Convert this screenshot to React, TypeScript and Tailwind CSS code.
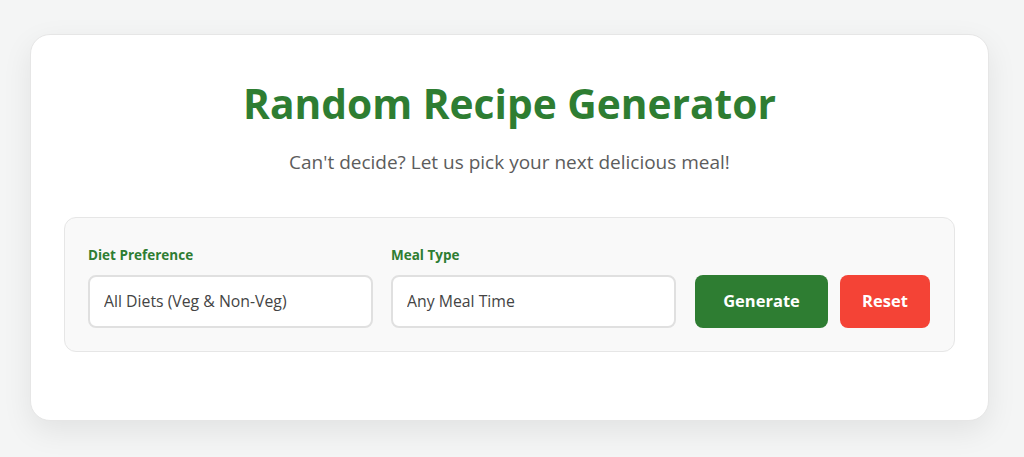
import React, { useState } from 'react';

const dietOptions = ['All Diets (Veg & Non-Veg)', 'Vegetarian', 'Non-Vegetarian', 'Vegan'];
const mealOptions = ['Any Meal Time', 'Breakfast', 'Lunch', 'Dinner', 'Snack'];

const SelectBox: React.FC<{ label: string; value: string; options: string[]; onChange: (v: string) => void }> = ({
  label,
  value,
  options,
  onChange,
}) => (
  <div className="flex flex-col w-[285px]">
    <label className="text-[13.5px] font-bold text-[#2e7d32] mb-[11px] leading-[18px]">{label}</label>
    <select
      value={value}
      onChange={(e) => onChange(e.target.value)}
      className="appearance-none h-[53px] px-[14px] bg-white border-2 border-[#e0e0e0] rounded-lg text-[15.8px] text-[#444] outline-none"
    >
      {options.map((o) => (
        <option key={o} value={o}>
          {o}
        </option>
      ))}
    </select>
  </div>
);

export default function App() {
  const [diet, setDiet] = useState(dietOptions[0]);
  const [meal, setMeal] = useState(mealOptions[0]);

  return (
    <div className="min-h-[457px] bg-[#f4f5f5] pt-[34px] pl-[30px] font-['Open_Sans',sans-serif]">
      <div className="w-[959px] bg-white rounded-[20px] border border-[#e6e6e6] shadow-[0_10px_30px_rgba(0,0,0,0.08)] px-[33px] pt-[42px] pb-[68px]">
        <h1 className="text-center text-[40.7px] font-bold text-[#2e7d32] leading-[52px]">
          Random Recipe Generator
        </h1>
        <p className="text-center text-[19px] text-[#5c5c5c] mt-[20px] mb-[42px] leading-[26px]">
          Can't decide? Let us pick your next delicious meal!
        </p>

        <div className="bg-[#f9f9f9] border border-[#e6e6e6] rounded-xl px-[23px] pt-[28px] pb-[23px] flex items-end">
          <div className="flex gap-[18px]">
            <SelectBox label="Diet Preference" value={diet} options={dietOptions} onChange={setDiet} />
            <SelectBox label="Meal Type" value={meal} options={mealOptions} onChange={setMeal} />
          </div>
          <button
            onClick={() => setDiet(dietOptions[Math.floor(Math.random() * dietOptions.length)])}
            className="ml-[19px] h-[53px] w-[133px] bg-[#2e7d32] text-white font-bold text-[16.5px] rounded-lg"
          >
            Generate
          </button>
          <button
            onClick={() => {
              setDiet(dietOptions[0]);
              setMeal(mealOptions[0]);
            }}
            className="ml-[12px] h-[53px] w-[90px] bg-[#f44336] text-white font-bold text-[16.5px] rounded-lg"
          >
            Reset
          </button>
        </div>
      </div>
    </div>
  );
}
